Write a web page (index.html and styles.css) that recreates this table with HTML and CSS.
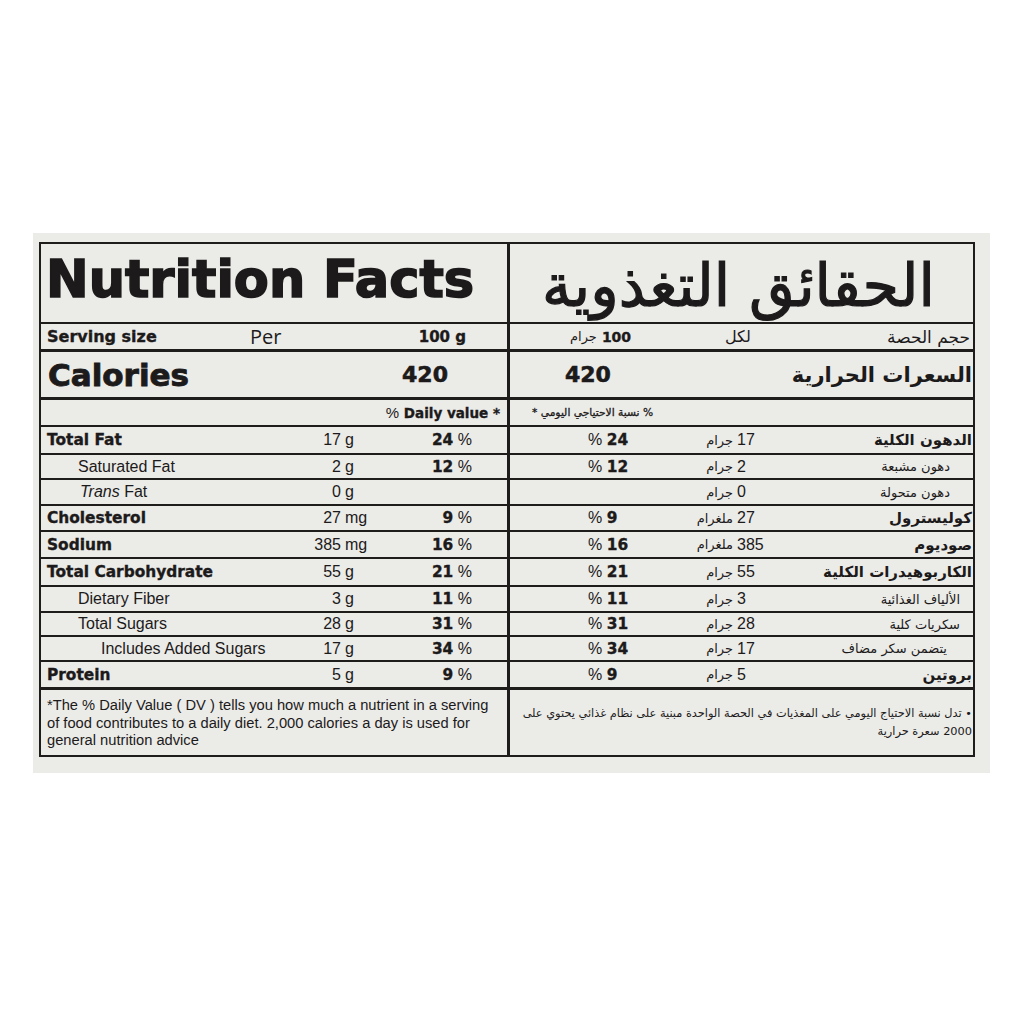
FILE: index.html
```html
<!DOCTYPE html>
<html lang="en">
<head>
<meta charset="utf-8">
<title>Nutrition Facts</title>
<link rel="stylesheet" href="styles.css">
</head>
<body>
<div class="sheet">
  <div class="label">
    <div class="row h-title">
      <div class="cell l title-l"><h1 class="title-en">Nutrition Facts</h1></div>
      <div class="cell r title-r"><h1 class="title-ar" dir="rtl">الحقائق التغذوية</h1></div>
    </div>

    <div class="row thick h-serv">
      <div class="cell l serv-l">
        <span class="heavy serv-label">Serving size</span>
        <span class="per">Per</span>
        <span class="heavy serv-val">100 g</span>
      </div>
      <div class="cell r serv-r">
        <span class="ar-amt"><span class="ar">جرام</span><b class="heavy">100</b></span>
        <span class="ar lkl" dir="rtl">لكل</span>
        <span class="ar serv-ar" dir="rtl">حجم الحصة</span>
      </div>
    </div>

    <div class="row thick h-cal">
      <div class="cell l cal-l">
        <span class="cal-label">Calories</span>
        <span class="cal-val">420</span>
      </div>
      <div class="cell r cal-r">
        <span class="cal-val">420</span>
        <span class="ar cal-ar" dir="rtl">السعرات الحرارية</span>
      </div>
    </div>

    <div class="row h-dv">
      <div class="cell l dv-l"><span class="dv-en"><span class="reg">%</span> Daily value *</span></div>
      <div class="cell r dv-r"><span class="ar dv-ar" dir="rtl">% نسبة الاحتياجي اليومي *</span></div>
    </div>

    <div class="row h28">
      <div class="cell l nut"><span class="name main">Total Fat</span><span class="num">17</span><span class="unit">g</span><span class="pct"><b>24</b> %</span></div>
      <div class="cell r nut-r"><span class="pct-r">% <b>24</b></span><span class="unit-r ar">جرام</span><span class="num-r">17</span><span class="name-r main-ar" dir="rtl">الدهون الكلية</span></div>
    </div>

    <div class="row h25">
      <div class="cell l nut"><span class="name sub">Saturated Fat</span><span class="num">2</span><span class="unit">g</span><span class="pct"><b>12</b> %</span></div>
      <div class="cell r nut-r"><span class="pct-r">% <b>12</b></span><span class="unit-r ar">جرام</span><span class="num-r">2</span><span class="name-r sub-ar in22" dir="rtl">دهون مشبعة</span></div>
    </div>

    <div class="row h26">
      <div class="cell l nut"><span class="name sub trans"><i>Trans</i> Fat</span><span class="num">0</span><span class="unit">g</span><span class="pct"></span></div>
      <div class="cell r nut-r"><span class="pct-r"></span><span class="unit-r ar">جرام</span><span class="num-r">0</span><span class="name-r sub-ar in22" dir="rtl">دهون متحولة</span></div>
    </div>

    <div class="row h26">
      <div class="cell l nut"><span class="name main">Cholesterol</span><span class="num">27</span><span class="unit">mg</span><span class="pct"><b>9</b> %</span></div>
      <div class="cell r nut-r"><span class="pct-r">% <b>9</b></span><span class="unit-r ar">ملغرام</span><span class="num-r">27</span><span class="name-r main-ar" dir="rtl">كوليسترول</span></div>
    </div>

    <div class="row h27">
      <div class="cell l nut"><span class="name main">Sodium</span><span class="num">385</span><span class="unit">mg</span><span class="pct"><b>16</b> %</span></div>
      <div class="cell r nut-r"><span class="pct-r">% <b>16</b></span><span class="unit-r ar">ملغرام</span><span class="num-r">385</span><span class="name-r main-ar" dir="rtl">صوديوم</span></div>
    </div>

    <div class="row h28">
      <div class="cell l nut"><span class="name main">Total Carbohydrate</span><span class="num">55</span><span class="unit">g</span><span class="pct"><b>21</b> %</span></div>
      <div class="cell r nut-r"><span class="pct-r">% <b>21</b></span><span class="unit-r ar">جرام</span><span class="num-r">55</span><span class="name-r main-ar" dir="rtl">الكاربوهيدرات الكلية</span></div>
    </div>

    <div class="row h26">
      <div class="cell l nut"><span class="name sub">Dietary Fiber</span><span class="num">3</span><span class="unit">g</span><span class="pct"><b>11</b> %</span></div>
      <div class="cell r nut-r"><span class="pct-r">% <b>11</b></span><span class="unit-r ar">جرام</span><span class="num-r">3</span><span class="name-r sub-ar in12" dir="rtl">الألياف الغذائية</span></div>
    </div>

    <div class="row h24">
      <div class="cell l nut"><span class="name sub">Total Sugars</span><span class="num">28</span><span class="unit">g</span><span class="pct"><b>31</b> %</span></div>
      <div class="cell r nut-r"><span class="pct-r">% <b>31</b></span><span class="unit-r ar">جرام</span><span class="num-r">28</span><span class="name-r sub-ar in12" dir="rtl">سكريات كلية</span></div>
    </div>

    <div class="row h25">
      <div class="cell l nut"><span class="name sub2">Includes Added Sugars</span><span class="num">17</span><span class="unit">g</span><span class="pct"><b>34</b> %</span></div>
      <div class="cell r nut-r"><span class="pct-r">% <b>34</b></span><span class="unit-r ar">جرام</span><span class="num-r">17</span><span class="name-r sub-ar in25" dir="rtl">يتضمن سكر مضاف</span></div>
    </div>

    <div class="row thick h28">
      <div class="cell l nut"><span class="name main">Protein</span><span class="num">5</span><span class="unit">g</span><span class="pct"><b>9</b> %</span></div>
      <div class="cell r nut-r"><span class="pct-r">% <b>9</b></span><span class="unit-r ar">جرام</span><span class="num-r">5</span><span class="name-r main-ar" dir="rtl">بروتين</span></div>
    </div>

    <div class="row last h-foot">
      <div class="cell l foot-l"><p>*The % Daily Value ( DV ) tells you how much a nutrient in a serving<br>of food contributes to a daily diet. 2,000 calories a day is used for<br>general nutrition advice</p></div>
      <div class="cell r foot-r"><p dir="rtl">• تدل نسبة الاحتياج اليومي على المغذيات في الحصة الواحدة مبنية على نظام غذائي يحتوي على<br>2000 سعرة حرارية</p></div>
    </div>
  </div>
</div>
</body>
</html>
```

FILE: styles.css
```css
* { box-sizing: border-box; }

body {
  margin: 0;
  background: #ffffff;
  font-family: "Liberation Sans", Arial, sans-serif;
  color: #1c1a1a;
}

.sheet {
  margin: 233px 0 0 33px;
  width: 957px;
  height: 540px;
  background: #ebebe8;
  padding: 9px 15px 0 6px;
}

.label {
  width: 936px;
  border: 2px solid #1f1c1c;
}

.row {
  display: grid;
  grid-template-columns: 469px 1fr;
  border-bottom: 2px solid #1f1c1c;
}
.row.thick { border-bottom-width: 3px; }
.row.last { border-bottom: 0; }

.h-title { height: 80px; }
.h-serv { height: 28px; }
.h-cal { height: 48px; }
.h-dv { height: 27px; }
.h24 { height: 24px; }
.h25 { height: 25px; }
.h26 { height: 26px; }
.h27 { height: 27px; }
.h28 { height: 28px; }
.h-foot { height: 65px; }

.cell {
  height: 100%;
  display: flex;
  align-items: center;
  min-width: 0;
}
.cell.l { border-right: 3px solid #1f1c1c; }

.heavy, .name.main, .pct b, .pct-r b, .dv-en, .cal-label, .cal-val, .title-en {
  font-family: "DejaVu Sans", sans-serif;
  font-weight: bold;
}
.heavy, .name.main, .pct b, .pct-r b, .dv-en {
  -webkit-text-stroke: 0.35px currentColor;
}

.ar { font-family: "DejaVu Sans", sans-serif; }

/* Title row */
.title-l { padding-left: 5px; }
.title-en {
  margin: 0;
  font-size: 51px;
  line-height: 1;
  position: relative;
  top: -4px;
  -webkit-text-stroke: 1.6px currentColor;
}
.title-r { justify-content: center; }
.title-ar {
  margin: 0;
  font-family: "DejaVu Sans", sans-serif;
  font-weight: normal;
  font-size: 59px;
  line-height: 1;
  position: relative;
  top: 2px;
  left: -3px;
  -webkit-text-stroke: 1.2px currentColor;
}

/* Serving */
.serv-l {
  display: grid;
  grid-template-columns: 203px auto 1fr;
  padding: 0 41px 0 6px;
}
.serv-label { font-size: 16px; }
.per { font-family: "Open Sans", sans-serif; font-size: 20px; line-height: 1; }
.serv-val { font-size: 15px; justify-self: end; }

.serv-r {
  display: grid;
  grid-template-columns: 155px auto 1fr;
  padding: 0 3px 0 60px;
}
.ar-amt { display: inline-flex; align-items: center; gap: 5px; font-size: 13px; }
.ar-amt .heavy { font-size: 14px; }
.lkl { font-size: 16px; }
.serv-ar { font-size: 17px; justify-self: end; }

/* Calories */
.cal-l {
  justify-content: space-between;
  padding: 0 59px 0 7px;
}
.cal-label { font-size: 31px; -webkit-text-stroke: 0.9px currentColor; }
.cal-val { font-size: 22px; -webkit-text-stroke: 0.6px currentColor; }
.cal-r {
  justify-content: space-between;
  padding: 0 1px 0 55px;
}
.cal-ar { font-size: 21px; font-weight: bold; }

/* Daily value header */
.dv-l { justify-content: flex-end; padding-right: 7px; }
.dv-en { font-size: 13.5px; }
.dv-en .reg { font-family: "Liberation Sans", sans-serif; font-weight: normal; font-size: 15px; -webkit-text-stroke: 0; }
.dv-r { padding-left: 22px; }
.dv-ar { font-size: 10.7px; -webkit-text-stroke: 0.3px currentColor; }

/* Nutrient rows, English */
.nut {
  display: grid;
  grid-template-columns: 1fr 41px 60px 71px;
  align-items: center;
  padding: 0 35px 0 6px;
}
.name { font-size: 16px; white-space: nowrap; }
.name.main { font-size: 15.4px; }
.name.sub { padding-left: 31px; }
.name.sub.trans { padding-left: 33px; }
.name.sub2 { padding-left: 54px; }
.num { font-size: 16px; text-align: right; }
.unit { font-size: 16px; padding-left: 4px; }
.pct { font-size: 16px; text-align: right; }
.pct b { font-size: 15.4px; }

/* Nutrient rows, Arabic */
.nut-r {
  display: grid;
  grid-template-columns: 78px 92px 53px 67px 1fr;
  align-items: center;
  padding-right: 1px;
}
.pct-r { grid-column: 2; font-size: 16px; }
.pct-r b { font-size: 15.4px; }
.unit-r { font-size: 13px; text-align: right; }
.num-r { font-size: 16px; padding-left: 4px; }
.name-r { text-align: right; white-space: nowrap; font-family: "DejaVu Sans", sans-serif; }
.main-ar { font-size: 15px; font-weight: bold; }
.sub-ar { font-size: 13px; }
.in12 { padding-right: 12px; }
.in22 { padding-right: 22px; }
.in25 { padding-right: 25px; }

/* Footnotes */
.foot-l { align-items: flex-start; padding: 7px 6px 0 6px; }
.foot-l p { margin: 0; font-size: 14.7px; line-height: 17.5px; white-space: nowrap; }
.foot-r { align-items: flex-start; padding: 14px 1px 0 4px; justify-content: flex-end; }
.foot-r p { margin: 0; font-family: "DejaVu Sans", sans-serif; font-size: 11.35px; line-height: 18px; text-align: right; width: 100%; white-space: nowrap; }
```
